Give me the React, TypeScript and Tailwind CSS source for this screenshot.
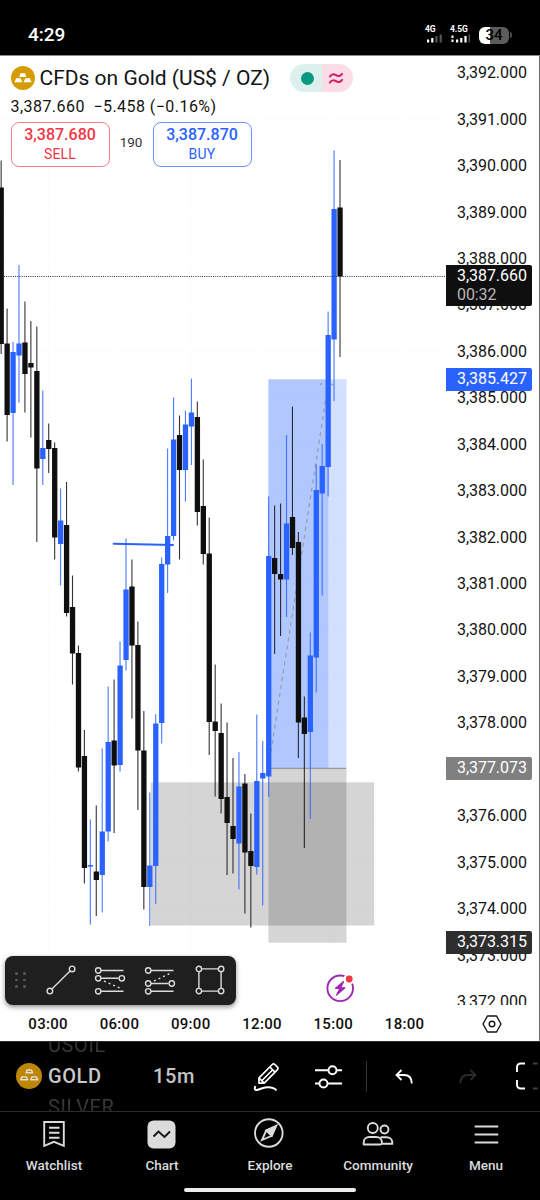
import type { ReactNode } from 'react';
import clsx from 'clsx';

// [high, body top, body bottom, low, rising]
type Candle = [number, number, number, number, 0 | 1];

const candles: Candle[] = [
  [160.5, 187.5, 344, 354, 0],
  [308.5, 343.5, 415, 441.5, 0],
  [342, 352, 413, 485, 1],
  [265, 343.5, 355.5, 402.5, 1],
  [301.5, 342.5, 374, 412.5, 0],
  [321, 363, 367.5, 437.5, 0],
  [326.5, 371, 468.5, 542, 0],
  [390.5, 448, 459, 485, 1],
  [423.5, 440, 449, 473, 0],
  [442.5, 448, 537.5, 559.5, 0],
  [488.5, 520.5, 544, 585.5, 1],
  [482, 525, 613, 616.5, 0],
  [575.5, 607, 653.5, 684.5, 0],
  [645.5, 653, 767.5, 771.5, 0],
  [730, 756, 868, 883.5, 0],
  [819.5, 865, 866.5, 924.5, 1],
  [805.5, 871.5, 880, 916, 0],
  [748.5, 831.5, 875, 912.5, 1],
  [686.5, 742, 831.5, 841.5, 1],
  [679.5, 740.5, 765.5, 833, 0],
  [641.5, 665.5, 765, 771.5, 1],
  [538.5, 589.5, 660, 670.5, 1],
  [559.5, 586.5, 645.5, 718.5, 0],
  [621.5, 645, 750.5, 810, 0],
  [711, 750.5, 887, 909.5, 0],
  [792.5, 865.5, 887, 926, 1],
  [714, 723.5, 866, 904, 1],
  [557.5, 564, 723, 743.5, 1],
  [448.5, 536, 564.5, 593, 1],
  [397.5, 439.5, 536, 540.5, 1],
  [415.5, 435, 470, 559.5, 0],
  [410.5, 424.5, 470, 501.5, 1],
  [378.5, 412.5, 426.5, 465, 1],
  [401.5, 417, 512, 525.5, 0],
  [459.5, 506, 554, 564.5, 0],
  [517.5, 553.5, 722, 755, 0],
  [664.5, 721.5, 731, 796.5, 0],
  [703.5, 733, 799, 813.5, 0],
  [722.5, 797, 823, 875, 0],
  [758, 826, 839, 873.5, 0],
  [752, 786.5, 843.5, 889.5, 1],
  [774, 783.5, 852.5, 913.5, 0],
  [813.5, 851, 866, 927.5, 0],
  [714.5, 781, 867, 874.5, 1],
  [741, 773, 778.5, 905.5, 1],
  [496.5, 556, 776.5, 797, 1],
  [505.5, 558, 574, 654, 0],
  [503.5, 574, 579.5, 636, 0],
  [435, 523.5, 579.5, 617, 1],
  [406.5, 517, 548, 555, 0],
  [532, 542, 722.5, 758, 0],
  [696.5, 717.5, 734, 848, 0],
  [632.5, 655.5, 732, 819, 1],
  [464.5, 490, 657.5, 692.5, 1],
  [444, 466, 493.5, 595.5, 1],
  [311.5, 335, 467, 496.5, 1],
  [150.5, 209, 339.5, 401, 1],
  [160, 207.5, 276.5, 357, 0],
];

const prices = Array.from({ length: 21 }, (_, i) => `3,${392 - i}.000`);
const hours = ['03:00', '06:00', '09:00', '12:00', '15:00', '18:00'];

function GoldBadge({ className, dim }: { className?: string; dim?: boolean }) {
  return (
    <svg viewBox="0 0 24 24" className={className}>
      <circle cx="12" cy="12" r="12" fill={dim ? '#bd8606' : '#d49b02'} />
      {dim ? (
        <g fill="#bd8606" stroke="#e3e0d8" strokeWidth="1.3" strokeLinejoin="round">
          <path d="M10.300 6.500h4l1 2.500H9.300z" />
          <path d="M5.500 12.800h4l1.300 2.700H4.300z" />
          <path d="M14.800 12.800h4l1.300 2.700h-6.500z" />
        </g>
      ) : (
        <g fill="#fff">
          <path d="M9.500 7.300h4.500l1.200 3.700H8.300z" />
          <path d="M5.200 12.200h4.300l1.900 4H3.400z" />
          <path d="M14.400 12.200h4.300l1.900 4h-8z" />
        </g>
      )}
    </svg>
  );
}

function SignalBars({ label, bars, dots }: { label: string; bars: number[]; dots?: boolean }) {
  return (
    <div className="flex flex-col items-start -mt-[2px]">
      <span className="text-[8.500px] leading-[9px] font-bold text-white tracking-[-0.1px]">{label}</span>
      <svg width="20" height="9" viewBox="0 0 20 9">
        {dots && <path d="M2.500 1.500v2.500M2.500 5.500v2.500" stroke="#fff" strokeWidth="2" />}
        {bars.map((h, i) => (
          <rect
            key={i}
            x={(dots ? 6 : 2) + i * 4.2}
            y={8.500 - h}
            width="2.200"
            height={h}
            fill={i >= bars.length - (dots ? 1 : 2) ? '#555' : '#fff'}
          />
        ))}
      </svg>
    </div>
  );
}

function StatusBar() {
  return (
    <div className="h-[56px] bg-black border-b border-[#8a8a8a] flex items-center pl-7 pr-[28px] pt-[15px]">
      <span className="text-[19px] font-medium text-white">4:29</span>
      <div className="ml-auto flex items-center">
        <div className="w-[25px]">
          <SignalBars label="4G" bars={[3, 4.5, 6.5, 8]} />
        </div>
        <div className="w-[29px]">
          <SignalBars label="4.5G" bars={[3, 4.5, 6.5, 8]} dots />
        </div>
        <div className="w-[30px] h-[17px] rounded-[6px] overflow-hidden flex items-center justify-center bg-linear-to-r from-white from-35% to-[#5c5c5c] to-35%">
          <span className="text-[15px] font-medium text-black">34</span>
        </div>
        <div className="w-[2px] h-[6px] ml-px rounded-r bg-[#4a4a4a]" />
      </div>
    </div>
  );
}

function ChartCanvas() {
  return (
    <svg width="446" height="949" viewBox="0 56 446 949" className="block shrink-0">
      {hours.map((h, i) => (
        <path key={h} d={`M${48.5 + i * 71.3} 56V1005`} stroke="#fcfcfc" />
      ))}
      {prices.map((p, i) => (
        <path key={p} d={`M0 ${73 + i * 46.45}H446`} stroke="#fcfcfc" />
      ))}

      {/* demand zone */}
      <rect x="150.700" y="782.300" width="223.500" height="143.200" fill="#000" fillOpacity=".165" />

      {/* long position */}
      <rect x="268.400" y="379.300" width="78.100" height="388.700" fill="#2962ff" fillOpacity=".2" />
      <rect x="268.400" y="379.300" width="60" height="388.700" fill="#2962ff" fillOpacity=".2" />
      <rect x="268.400" y="768" width="78.100" height="174.700" fill="#000" fillOpacity=".165" />
      <path d="M268.400 768.300H346" stroke="#8a8a8a" />
      <path d="M268.400 768L328.600 381" stroke="#999ba3" strokeWidth="1.200" strokeDasharray="4 4" />
      <path d="M320 384.500l2-1M330.500 383.500l3 2" stroke="#888" />

      {candles.map(([high, top, bottom, low, up], i) => {
        const x = 1.15 + i * 5.945;
        const color = up ? '#2962ff' : '#0f0f0f';
        return (
          <g key={i}>
            <path d={`M${x} ${high}V${low}`} stroke={color} strokeOpacity=".85" strokeWidth="1.1" />
            <rect x={x - 2.6} y={top} width="5.300" height={bottom - top} fill={color} />
          </g>
        );
      })}

      <path d="M113.700 543.800L173 545" stroke="#2962ff" strokeWidth="2" strokeLinecap="round" />
      <path d="M4 276.500H446" stroke="#333" strokeDasharray="1 1.2" />

      {/* news marker */}
      <circle cx="340.200" cy="988.300" r="12.800" fill="none" stroke="#9c27b0" strokeWidth="1.900" />
      <path
        d="M343.800 981.200l-8.500 7.300h4.500l-3.300 6.700 8.500-7.300h-4.500z"
        fill="#9c27b0"
        stroke="#9c27b0"
        strokeWidth="1.100"
        strokeLinejoin="round"
      />
      <circle cx="349.200" cy="979" r="5.800" fill="#fff" />
      <circle cx="349.200" cy="979" r="3.400" fill="#f23645" />
    </svg>
  );
}

function OrderButton({ price, label, className }: { price: string; label: string; className: string }) {
  return (
    <button
      className={clsx(
        'w-[99px] h-[45px] rounded-lg border bg-white flex flex-col items-center pt-[2px]',
        className,
      )}
    >
      <span className="text-[16px] leading-[20px] font-medium">{price}</span>
      <span className="text-[14px] leading-[18px] tracking-[0.2px]">{label}</span>
    </button>
  );
}

function SymbolHeader() {
  return (
    <div className="absolute left-0 top-0 pl-[10.500px] pt-2 text-[#131313]">
      <div className="flex items-center h-7">
        <GoldBadge className="w-6 h-6" />
        <span className="ml-[5px] w-[250.500px] text-[21px] leading-7 whitespace-nowrap">
          CFDs on Gold (US$ / OZ)
        </span>
        <div className="flex w-[63px] h-7 rounded-full overflow-hidden">
          <div className="flex-1 bg-[#dcf1ee] flex items-center justify-center pl-[3px]">
            <div className="w-[13px] h-[13px] rounded-full bg-[#089981]" />
          </div>
          <div className="flex-1 bg-[#fbdde8] flex items-center justify-center pr-[3px]">
            <svg width="16" height="13" viewBox="0 0 16 13" fill="none" stroke="#d81b60" strokeWidth="2">
              <path d="M1.500 5.200C3.500 1.500 6 2 8 3.200s4.500 1.500 6.500-2" />
              <path d="M1.500 11.200c2-3.700 4.500-3.200 6.500-2s4.500 1.500 6.500-2" />
            </svg>
          </div>
        </div>
      </div>
      <div className="h-[30px] pt-[5px] text-[16px] leading-5 tracking-[0.450px] flex gap-[8.500px]">
        <span>3,387.660</span>
        <span>−5.458 (−0.16%)</span>
      </div>
      <div className="flex items-center">
        <OrderButton price="3,387.680" label="SELL" className="border-[#f77c86] text-[#f23645]" />
        <span className="w-[43px] text-center text-[13.500px] tracking-[-0.1px] text-[#333] -mt-1">190</span>
        <OrderButton price="3,387.870" label="BUY" className="border-[#6b92ff] text-[#2962ff]" />
      </div>
    </div>
  );
}

function PriceTag({ className, children }: { className: string; children: ReactNode }) {
  return (
    <div className={clsx('absolute left-0 w-[86px] pl-[11px] rounded-r-[2px] text-white', className)}>
      {children}
    </div>
  );
}

function PriceScale() {
  return (
    <div className="relative w-[93px] h-[949px] shrink-0 overflow-hidden text-[16px] tracking-[-0.05px] text-[#131313]">
      <div className="flex flex-col -mt-[6px]">
        {prices.map((p) => (
          <div key={p} className="h-[46.450px] shrink-0 flex items-center pl-[11px]">
            {p}
          </div>
        ))}
      </div>
      <PriceTag className="top-[209px] h-[41px] bg-[#0f0f0f] leading-[19px] pt-px">
        <div>3,387.660</div>
        <div className="text-[#b8b8b8] tracking-[-0.1px]">00:32</div>
      </PriceTag>
      <PriceTag className="top-[312px] h-[23px] leading-[22px] bg-[#2962ff]">3,385.427</PriceTag>
      <PriceTag className="top-[701px] h-[23px] leading-[22px] bg-[#808080]">3,377.073</PriceTag>
      <PriceTag className="top-[875px] h-[23px] leading-[22px] bg-[#2e2e2e]">3,373.315</PriceTag>
    </div>
  );
}

function Tool({ children, className }: { children: ReactNode; className?: string }) {
  return (
    <svg
      width="32"
      height="32"
      viewBox="0 0 32 32"
      fill="none"
      stroke="#dbdbdb"
      strokeWidth="1.4"
      className={clsx('shrink-0', className)}
    >
      {children}
    </svg>
  );
}

function DrawingTools() {
  return (
    <div className="absolute left-[4.500px] top-[899.500px] w-[231px] h-[49px] rounded-lg bg-[#1f1f1f] shadow-[0_2px_5px_rgba(0,0,0,0.45)] flex items-center">
      <div className="ml-[10.500px] grid grid-cols-2 gap-x-[5.500px] gap-y-[4.200px]">
        {[0, 1, 2, 3, 4, 5].map((d) => (
          <div key={d} className="w-[2.500px] h-[2.500px] rounded-full bg-[#5a5a5a]" />
        ))}
      </div>
      <Tool className="ml-[19px]">
        <path d="M6.700 25.300L25.300 6.700" />
        <circle cx="4.900" cy="27.100" r="2.800" />
        <circle cx="27.100" cy="4.900" r="2.800" />
      </Tool>
      <Tool className="ml-[17.500px]">
        <path d="M7 6.500h22.500M7 14.300h17.500M7 27.300h22.500" />
        <path d="M10 17l18 8" strokeDasharray="2 3" />
        <circle cx="4.200" cy="6.500" r="2.700" />
        <circle cx="4.200" cy="14.300" r="2.700" />
        <circle cx="27.800" cy="14.300" r="2.700" />
        <circle cx="4.200" cy="27.300" r="2.700" />
      </Tool>
      <Tool className="ml-[17.500px]">
        <path d="M7 6.500h22.500M7 19.500h17.500M7 27.300h22.500" />
        <path d="M10 17l18-8.500" strokeDasharray="2 3" />
        <circle cx="4.200" cy="6.500" r="2.700" />
        <circle cx="4.200" cy="19.500" r="2.700" />
        <circle cx="27.800" cy="19.500" r="2.700" />
        <circle cx="4.200" cy="27.300" r="2.700" />
      </Tool>
      <Tool className="ml-[18.500px]">
        <path d="M7.600 4.900h16.800M7.600 27.100h16.800M4.900 7.600v16.800M27.100 7.600v16.800" />
        <circle cx="4.900" cy="4.900" r="2.700" />
        <circle cx="27.100" cy="4.900" r="2.700" />
        <circle cx="4.900" cy="27.100" r="2.700" />
        <circle cx="27.100" cy="27.100" r="2.700" />
      </Tool>
    </div>
  );
}

function TimeScale() {
  return (
    <div className="h-[36px] flex items-center pt-[2px] pl-[12.500px] text-[15px] font-medium text-[#0f0f0f]">
      {hours.map((h) => (
        <span key={h} className="w-[71.300px] text-center tracking-[0.3px]">
          {h}
        </span>
      ))}
      <svg width="20" height="18" viewBox="0 0 20 18" fill="none" stroke="#131313" strokeWidth="1.400" className="ml-[42px]">
        <path d="M5.500 1h9l4.500 8-4.500 8h-9L1 9z" strokeLinejoin="round" />
        <circle cx="10" cy="9" r="2.800" />
      </svg>
    </div>
  );
}

function ChartToolbar() {
  return (
    <div className="h-[71px] border-y border-[#2b2b2b] bg-black flex items-center overflow-hidden">
      <GoldBadge className="ml-4 -mt-[2px] w-[26px] h-[26px] shrink-0" dim />
      <div className="ml-[6px] w-[105px] shrink-0 text-[20px] leading-[31px] flex flex-col items-start">
        <span className="bg-linear-to-b from-[#1c1c1c] to-[#4a4a4a] bg-clip-text text-transparent tracking-[0.6px]">
          USOIL
        </span>
        <span className="font-medium text-[#c9c9c9] tracking-[0.6px]">GOLD</span>
        <span className="bg-linear-to-b from-[#4a4a4a] to-[#1c1c1c] bg-clip-text text-transparent tracking-[0.6px]">
          SILVER
        </span>
      </div>
      <span className="w-[100px] -mt-px shrink-0 text-[20px] font-medium text-[#c4c4c4] tracking-[0.6px]">15m</span>
      <svg width="28" height="32" viewBox="0 0 28 32" fill="none" stroke="#fff" strokeWidth="1.700" strokeLinejoin="round" className="shrink-0">
        <path d="M6 16.800L19.300 3.500a1.800 1.800 0 0 1 2.500 0l2.700 2.700a1.800 1.800 0 0 1 0 2.500L11.200 22.200H6z" />
        <path d="M16.800 6l5.200 5.200M6 17l5.200 5.200M9 19.500L20 8.500" />
        <path d="M2.500 25c-1.500 2.500-.5 4.500 1.500 4 4-1 5.500-2.500 10-2.700 4-.2 7.500.7 9.500 3.200" strokeWidth="2" />
      </svg>
      <svg width="28" height="24" viewBox="0 0 28 24" fill="none" stroke="#fff" strokeWidth="1.900" className="ml-[33px] shrink-0">
        <path d="M1 5.200h13.500M22.500 5.200H28M1 18.500h4.500M13.500 18.500H28" />
        <circle cx="18.500" cy="5.200" r="4" />
        <circle cx="9.500" cy="18.500" r="4" />
      </svg>
      <div className="ml-[24px] w-px h-[31px] bg-[#333] shrink-0" />
      <svg width="18" height="16" viewBox="0 0 18 16" fill="none" stroke="#fff" strokeWidth="1.800" className="ml-[27.500px] shrink-0">
        <path d="M6.500 1L1.500 6l5 5M1.500 6H9c5 0 7.800 2.800 7.800 8.500" />
      </svg>
      <svg width="18" height="16" viewBox="0 0 18 16" fill="none" stroke="#2b2b2b" strokeWidth="1.800" className="ml-[46px] shrink-0">
        <path d="M11.500 1l5 5-5 5M16.500 6H9C4 6 1.200 8.800 1.200 14.500" />
      </svg>
      <svg width="24" height="28" viewBox="0 0 24 28" fill="none" stroke="#fff" strokeWidth="1.900" className="ml-[39.500px] -mt-px shrink-0">
        <path d="M1 10V5a3.500 3.500 0 0 1 3.500-3.500H9M1 18v5a3.500 3.500 0 0 0 3.500 3.500H9" />
        <path d="M17 1.500h4.500M17 26.500h4.500" stroke="#444" />
      </svg>
    </div>
  );
}

const navItems: { label: string; icon: ReactNode }[] = [
  {
    label: 'Watchlist',
    icon: (
      <>
        <path d="M6.200 3h19.600v23.800l-9.800-4-9.800 4z" />
        <path d="M11 8.800h10.500M11 13.800h10.500M11 18.800h10.500" />
      </>
    ),
  },
  {
    label: 'Chart',
    icon: (
      <>
        <rect x="1.500" y="1.500" width="28" height="28" rx="6" fill="#dbdbdb" stroke="none" />
        <path d="M7.500 17.500l5-5 6 5.500 5.500-5.500" stroke="#131313" strokeWidth="1.900" />
      </>
    ),
  },
  {
    label: 'Explore',
    icon: (
      <>
        <circle cx="14.800" cy="14" r="13.800" />
        <path d="M22 7l-9.800 4.500L8 21l9.700-4.200z" />
        <path d="M22 7l-9.800 4.500 5.500 5.300z" fill="#dbdbdb" />
      </>
    ),
  },
  {
    label: 'Community',
    icon: (
      <>
        <circle cx="10.800" cy="9" r="5" />
        <circle cx="22.500" cy="10.500" r="4" />
        <path d="M1.700 25.500v-2.300c0-3.300 2.500-5.200 5.800-5.200h6.600c3.300 0 5.800 1.900 5.800 5.200v.8c0 .9-.6 1.500-1.500 1.500z" strokeLinejoin="round" />
        <path d="M18.500 18.200h6c3.300 0 5.800 2 5.800 5.200v1.400h-10" />
      </>
    ),
  },
  {
    label: 'Menu',
    icon: <path d="M4.700 7.500h23.500M4.700 15.500h23.500M4.700 23.500h23.500" strokeWidth="2.200" />,
  },
];

function BottomNav() {
  return (
    <div className="h-[88px] bg-black">
      <div className="flex h-[76px] pt-[7px]">
        {navItems.map((item) => (
          <div key={item.label} className="w-[108px] flex flex-col items-center">
            <svg width="31" height="31" viewBox="0 0 31 31" fill="none" stroke="#dbdbdb" strokeWidth="1.900" className="-ml-[2px] overflow-visible">
              {item.icon}
            </svg>
            <span className="mt-[7px] text-[13.500px] leading-4 font-medium text-[#dbdbdb]">{item.label}</span>
          </div>
        ))}
      </div>
      <div className="mx-auto w-[172px] h-1 rounded-full bg-[#ececec]" />
    </div>
  );
}

export default function App() {
  return (
    <div className="w-[540px] h-[1200px] overflow-hidden bg-white font-[Roboto,sans-serif]">
      <StatusBar />
      <div className="h-[985px] border-r border-[#6a6a6a]">
        <div className="relative flex">
          <ChartCanvas />
          <PriceScale />
          <SymbolHeader />
          <DrawingTools />
        </div>
        <TimeScale />
      </div>
      <ChartToolbar />
      <BottomNav />
    </div>
  );
}
